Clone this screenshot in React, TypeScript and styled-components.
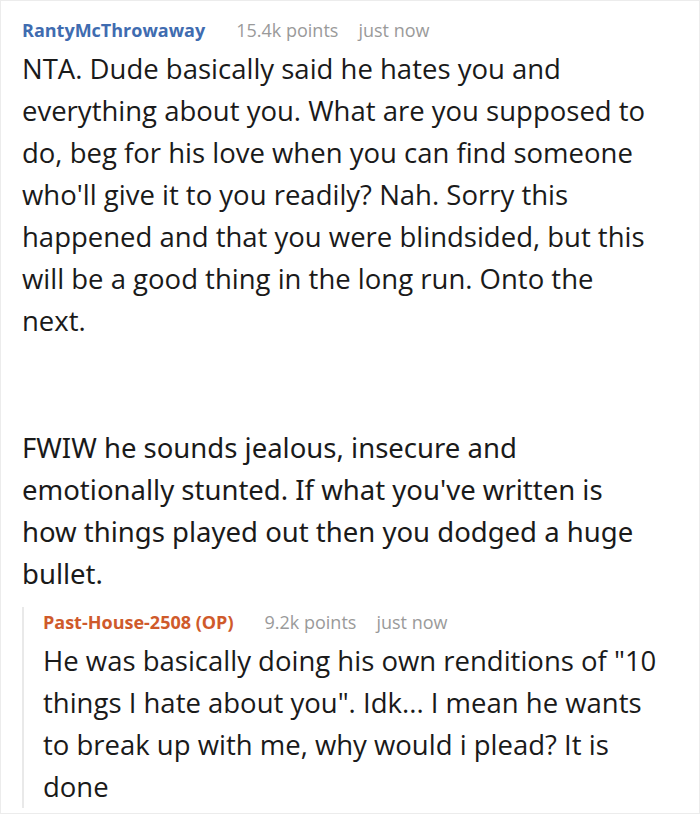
import React from "react";
import styled, { createGlobalStyle } from "styled-components";

const Global = createGlobalStyle`
  html, body { margin: 0; padding: 0; background: #fff; }
  body { font-family: "Open Sans", "Noto Sans", sans-serif; }
`;

const Frame = styled.div`
  box-sizing: border-box;
  width: 700px;
  height: 814px;
  border: 1px solid #ececec;
  padding: 14px 23px 0 21px;
  overflow: hidden;
`;

const Header = styled.div`
  display: flex;
  align-items: baseline;
  font-size: 18px;
  line-height: 30px;
  white-space: nowrap;
`;

const User = styled.span<{ $op?: boolean }>`
  font-weight: 700;
  color: ${(p) => (p.$op ? "#cf5a2b" : "#3f6cb0")};
  margin-right: 31px;
`;

const Meta = styled.span`
  color: #9a9a9a;
  margin-right: 20px;
`;

const Body = styled.div<{ $inset?: number }>`
  margin-top: 3px;
  margin-right: ${(p) => p.$inset ?? 0}px;
  font-size: 27.5px;
  line-height: 42px;
  color: #1a1a1a;
`;

const Para = styled.p<{ $gap?: number }>`
  margin: 0 0 ${(p) => p.$gap ?? 0}px 0;
`;

const Narrow = styled.p`
  margin: 0;
  font-family: "Noto Sans", "Open Sans", sans-serif;
  width: 628px;
`;

const Reply = styled.div`
  margin-top: 12px;
  border-left: 2px solid #e9e9e9;
  padding-left: 19px;
  display: flex;
  flex-direction: column;
`;

export default function App() {
  return (
    <>
      <Global />
      <Frame>
        <Header>
          <User>RantyMcThrowaway</User>
          <Meta>15.4k points</Meta>
          <Meta>just now</Meta>
        </Header>
        <Body>
          <Para $gap={85}>
            NTA. Dude basically said he hates you and everything about you. What are you supposed to do, beg for his love when you can find someone who'll give it to you readily? Nah. Sorry this happened and that you were blindsided, but this will be a good thing in the long run. Onto the
            <br />
            next.
          </Para>
          <Narrow>
            FWIW he sounds jealous, insecure and emotionally stunted. If what you've written is how things played out then you dodged a huge bullet.
          </Narrow>
        </Body>
        <Reply>
          <Header>
            <User $op>Past-House-2508 (OP)</User>
            <Meta>9.2k points</Meta>
            <Meta>just now</Meta>
          </Header>
          <Body $inset={4}>
            <Para>
              He was basically doing his own renditions of "10 things I hate about you". Idk... I mean he wants to break up with me, why would i plead? It is done
            </Para>
          </Body>
        </Reply>
      </Frame>
    </>
  );
}
